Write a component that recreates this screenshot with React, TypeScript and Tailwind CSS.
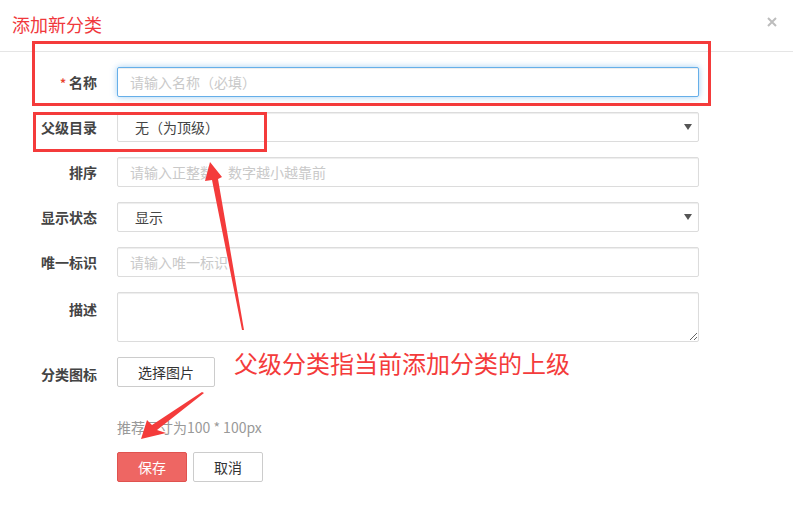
import React from 'react';

const font = { fontFamily: '"Noto Sans CJK SC", "Liberation Sans", sans-serif' };

const inputShape =
  'h-[30px] w-[582px] rounded-[2px] border bg-white pl-[12px] text-[14px] text-[#555] outline-none placeholder:text-[#c9c9c9]';
const inputBase = `${inputShape} border-[#dcdcdc] shadow-[inset_0_1px_1px_rgba(0,0,0,0.075)]`;
const inputFocus = `${inputShape} border-[#66afe9] shadow-[inset_0_1px_1px_rgba(0,0,0,0.075),0_0_6px_rgba(102,175,233,0.6)]`;

const Label = ({ children, required, low }: { children: React.ReactNode; required?: boolean; low?: boolean }) => (
  <div
    className={`h-[30px] w-[97px] shrink-0 text-right text-[14px] font-bold text-[#444] ${low ? 'leading-[34px]' : 'leading-[30px]'}`}
  >
    {required && <span className="mr-[3px] text-[12px] text-[#e8432f]">*</span>}
    {children}
  </div>
);

const FakeSelect = ({ value }: { value: string }) => (
  <div className="relative h-[30px] w-[582px] rounded-[2px] border border-[#dcdcdc] bg-white pl-[17px] text-[14px] leading-[28px] text-[#444] shadow-[inset_0_1px_1px_rgba(0,0,0,0.075)]">
    {value}
    <svg className="absolute right-[6px] top-[10px]" width="8" height="8" viewBox="0 0 8 8">
      <polygon points="0,1 8,1 4,7" fill="#555" />
    </svg>
  </div>
);

export default function App() {
  return (
    <div className="relative h-[510px] w-[793px] overflow-hidden bg-white" style={font}>
      {/* header */}
      <div className="flex h-[52px] items-start justify-between border-b border-[#e5e5e5] pl-[12px] pr-[16px]">
        <h2 className="pt-[12px] text-[18px] font-normal leading-[24px] text-[#f0383c]">添加新分类</h2>
        <svg className="mt-[17px]" width="10" height="10" viewBox="0 0 10 10">
          <path d="M1 1L9 9M9 1L1 9" stroke="#bdbdbd" strokeWidth="2" />
        </svg>
      </div>

      {/* form */}
      <div className="flex flex-col gap-[15px] pt-[15px]">
        <div className="flex gap-[20px]">
          <Label required>名称</Label>
          <input className={inputFocus} placeholder="请输入名称（必填）" />
        </div>
        <div className="flex gap-[20px]">
          <Label>父级目录</Label>
          <FakeSelect value="无（为顶级）" />
        </div>
        <div className="flex gap-[20px]">
          <Label>排序</Label>
          <input className={inputBase} placeholder="请输入正整数，数字越小越靠前" />
        </div>
        <div className="flex gap-[20px]">
          <Label>显示状态</Label>
          <FakeSelect value="显示" />
        </div>
        <div className="flex gap-[20px]">
          <Label>唯一标识</Label>
          <input className={inputBase} placeholder="请输入唯一标识" />
        </div>
        <div className="flex h-[50px] gap-[20px]">
          <Label low>描述</Label>
          <textarea className={`${inputBase} block h-[50px] resize`} />
        </div>
        <div className="flex gap-[20px]">
          <Label low>分类图标</Label>
          <button className="h-[30px] w-[98px] rounded-[2px] border border-[#cccccc] bg-white text-[14px] text-[#333]">
            选择图片
          </button>
        </div>
        <div className="ml-[117px] mt-[15px] text-[14px] leading-[20px] text-[#999]">推荐尺寸为100 * 100px</div>
        <div className="ml-[117px] flex gap-[6px]">
          <button className="h-[30px] w-[70px] rounded-[2px] border border-[#e0524f] bg-[#ee6663] text-[14px] text-white">
            保存
          </button>
          <button className="h-[30px] w-[70px] rounded-[2px] border border-[#cccccc] bg-white text-[14px] text-[#333]">
            取消
          </button>
        </div>
      </div>

      {/* annotation overlay */}
      <div className="pointer-events-none absolute left-[32px] top-[41px] h-[65px] w-[679px] border-[3px] border-[#f43b3b]" />
      <div className="pointer-events-none absolute left-[33px] top-[112px] h-[40px] w-[234px] border-[3px] border-[#f43b3b]" />
      <div className="pointer-events-none absolute left-[234px] top-[348px] text-[24px] leading-[30px] text-[#f43b3b]">
        父级分类指当前添加分类的上级
      </div>
      <svg className="pointer-events-none absolute left-0 top-0" width="793" height="510" viewBox="0 0 793 510">
        <polygon
          points="210,162 222,177 218,179 244,330 242,330 212,180 205,181"
          fill="#f43b3b"
        />
        <polygon
          points="141,439 147,420 152,425 202,392 204,393 157,430 166,433"
          fill="#f43b3b"
        />
      </svg>
    </div>
  );
}
